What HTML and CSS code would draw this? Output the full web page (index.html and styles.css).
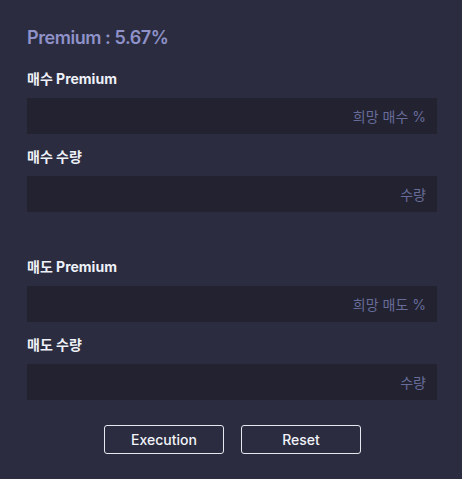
FILE: index.html
```html
<!DOCTYPE html>
<html lang="ko">
<head>
<meta charset="utf-8">
<link rel="stylesheet" href="styles.css">
</head>
<body>
<div class="panel">
  <div class="title">Premium : 5.67%</div>
  <div class="group">
    <label class="label">매수 Premium</label>
    <input class="field" type="text" placeholder="희망 매수 %">
  </div>
  <div class="group">
    <label class="label">매수 수량</label>
    <input class="field" type="text" placeholder="수량">
  </div>
  <div class="group spaced">
    <label class="label">매도 Premium</label>
    <input class="field" type="text" placeholder="희망 매도 %">
  </div>
  <div class="group">
    <label class="label">매도 수량</label>
    <input class="field" type="text" placeholder="수량">
  </div>
  <div class="actions">
    <button class="btn">Execution</button>
    <button class="btn">Reset</button>
  </div>
</div>
</body>
</html>
```
FILE: styles.css
```css
html, body {
  margin: 0;
  padding: 0;
  background: #2b2c3f;
  height: 100%;
}
body {
  font-family: "Inter", "Noto Sans CJK KR", sans-serif;
}
.panel {
  padding: 28px 25px 0 27px;
  display: flex;
  flex-direction: column;
}
.title {
  height: 20px;
  line-height: 20px;
  font-size: 18px;
  font-weight: 600;
  color: #8f92c9;
  letter-spacing: -0.45px;
  margin-bottom: 22px;
}
.group {
  display: flex;
  flex-direction: column;
  gap: 10px;
  margin-bottom: 14px;
}
.group.spaced {
  margin-top: 32px;
}
.label {
  height: 18px;
  line-height: 18px;
  font-size: 14px;
  font-weight: 700;
  color: #eef1f8;
}
.field {
  box-sizing: border-box;
  height: 36px;
  width: 100%;
  border: none;
  outline: none;
  background: #222231;
  padding: 0 11px;
  text-align: right;
  font-family: "Inter", "Noto Sans CJK KR", sans-serif;
  font-size: 14px;
  color: #c8cbe6;
}
.field::placeholder {
  color: #676c98;
}
.actions {
  display: flex;
  justify-content: center;
  gap: 17px;
  margin-top: 11px;
  padding-left: 1px;
}
.btn {
  box-sizing: border-box;
  width: 120px;
  height: 29px;
  background: transparent;
  border: 1px solid #e6e8f0;
  border-radius: 3px;
  color: #f2f4fa;
  font-family: "Inter", "Noto Sans CJK KR", sans-serif;
  font-size: 14px;
  font-weight: 500;
  padding: 0;
}
```
